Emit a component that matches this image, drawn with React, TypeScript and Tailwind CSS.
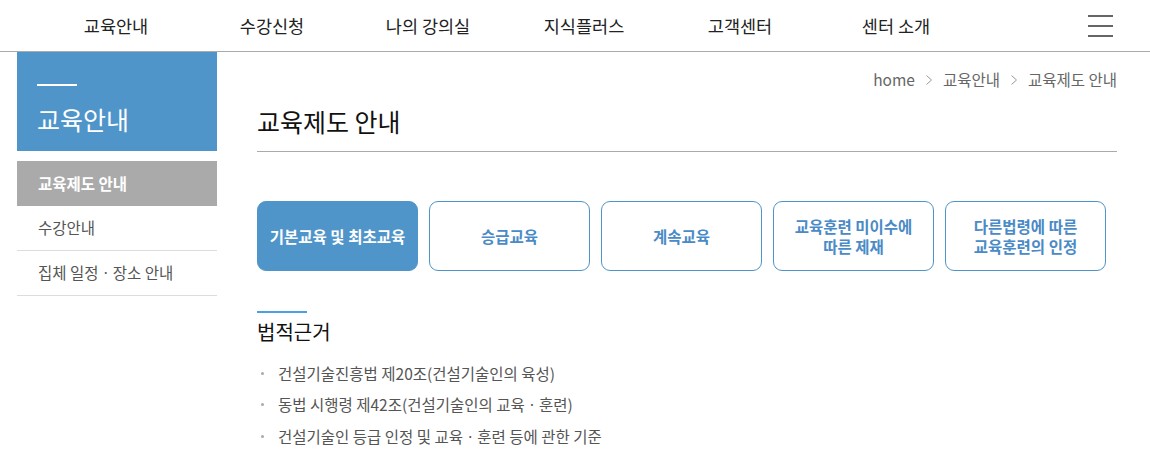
const navItems = ["교육안내", "수강신청", "나의 강의실", "지식플러스", "고객센터", "센터 소개"];

const tabs = [
  { label: ["기본교육 및 최초교육"], active: true },
  { label: ["승급교육"] },
  { label: ["계속교육"] },
  { label: ["교육훈련 미이수에", "따른 제재"] },
  { label: ["다른법령에 따른", "교육훈련의 인정"] },
];

const laws = [
  "건설기술진흥법 제20조(건설기술인의 육성)",
  "동법 시행령 제42조(건설기술인의 교육ㆍ훈련)",
  "건설기술인 등급 인정 및 교육ㆍ훈련 등에 관한 기준",
];

function Chevron() {
  return (
    <svg width="8" height="12" viewBox="0 0 8 12" className="mx-[10px]">
      <path d="M1.5 1.5 L6.5 6 L1.5 10.5" fill="none" stroke="#999" strokeWidth="1" />
    </svg>
  );
}

export default function App() {
  return (
    <div
      className="w-[1150px] h-[470px] overflow-hidden bg-white text-[#222]"
      style={{ fontFamily: '"Noto Sans CJK KR", "Noto Sans", sans-serif' }}
    >
      {/* Header */}
      <header className="relative h-[52px] border-b border-[#aaa] flex items-center">
        <nav className="flex items-center ml-[38px]">
          {navItems.map((item) => (
            <div key={item} className="w-[156px] text-center text-[17.5px] leading-none text-[#222]">
              {item}
            </div>
          ))}
        </nav>
        <div className="ml-auto mr-[37px] flex flex-col gap-[8px] w-[25px]">
          <span className="block h-[2px] bg-[#666]" />
          <span className="block h-[2px] bg-[#666]" />
          <span className="block h-[2px] bg-[#666]" />
        </div>
      </header>

      <div className="flex">
        {/* Sidebar */}
        <aside className="w-[200px] ml-[17px] shrink-0">
          <div className="h-[99px] bg-[#5095c9] pl-[20px] pt-[32px]">
            <div className="w-[40px] h-[2px] bg-white" />
            <div className="mt-[21px] text-[25px] leading-none text-white">교육안내</div>
          </div>
          <ul className="mt-[10px]">
            <li className="h-[45px] bg-[#aaa] flex items-center pl-[21px] text-[15.5px] font-bold text-white">
              교육제도 안내
            </li>
            <li className="h-[45px] border-b border-[#ddd] flex items-center pl-[21px] text-[15.5px] text-[#555]">
              수강안내
            </li>
            <li className="h-[45px] border-b border-[#ddd] flex items-center pl-[21px] text-[15.5px] text-[#555]">
              집체 일정ㆍ장소 안내
            </li>
          </ul>
        </aside>

        {/* Main */}
        <main className="ml-[40px] w-[860px]">
          <div className="flex items-center justify-end pt-[20px] text-[15.5px] leading-none text-[#666]">
            <span>home</span>
            <Chevron />
            <span>교육안내</span>
            <Chevron />
            <span>교육제도 안내</span>
          </div>
          <h1 className="mt-[16px] pb-[13px] border-b border-[#aaa] text-[25px] leading-[34px] text-[#111]">
            교육제도 안내
          </h1>

          <div className="mt-[49px] flex gap-[11px]">
            {tabs.map((t) => (
              <div
                key={t.label.join()}
                className={
                  t.active
                    ? "w-[161px] h-[70px] rounded-[9px] bg-[#5095c9] border border-[#5095c9] flex flex-col items-center justify-center text-[15.5px] leading-[20px] font-bold text-white"
                    : "w-[161px] h-[70px] rounded-[9px] bg-white border border-[#5095c9] flex flex-col items-center justify-center text-[15.5px] leading-[20px] font-bold text-[#4a8ac6]"
                }
              >
                {t.label.map((l) => (
                  <span key={l}>{l}</span>
                ))}
              </div>
            ))}
          </div>

          <div className="mt-[40px] w-[50px] h-[2px] bg-[#4aa0e4]" />
          <h2 className="mt-[5px] text-[20px] leading-[28px] text-[#111]">법적근거</h2>
          <ul className="mt-[17px] flex flex-col gap-[10.5px]">
            {laws.map((law) => (
              <li key={law} className="flex items-center text-[15.5px] leading-[21px] text-[#555]">
                <span className="ml-[4px] mr-[14px] w-[3px] h-[3px] rounded-full bg-[#aaa]" />
                {law}
              </li>
            ))}
          </ul>
        </main>
      </div>
    </div>
  );
}
